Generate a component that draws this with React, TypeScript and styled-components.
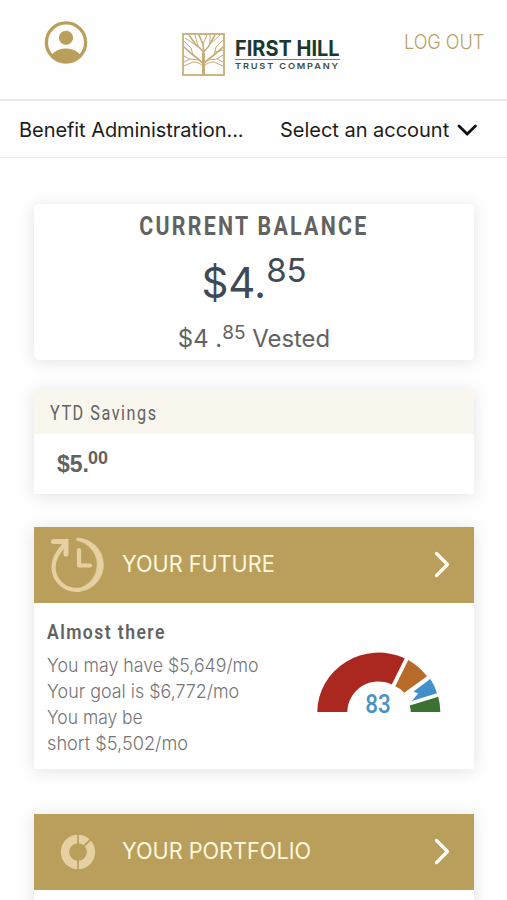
import React from "react";
import styled, { createGlobalStyle } from "styled-components";

const GOLD = "#b99f5b";
const CREAM = "#e6d0a2";

const Global = createGlobalStyle`
  * { box-sizing: border-box; }
  body { margin: 0; background: #fefefe; font-family: Inter, "Open Sans", sans-serif; color: #626262; overflow: hidden; }
`;

const Screen = styled.div`
  height: 900px;
  overflow: hidden;
`;

const Header = styled.header`
  display: flex;
  height: 101px;
  padding: 21px 23px 0 44px;
  border-bottom: 2px solid #e9e9e9;
  background: #fefefe;
`;

const Brand = styled.div`
  display: flex;
  margin: 12px 0 0 94px;
  gap: 10px;
  flex: 1;
`;

const BrandWords = styled.div`
  width: 105px;
  padding-top: 4px;
  color: #183830;
  white-space: nowrap;
`;

const BrandName = styled.div`
  height: 23px;
  border-bottom: 1px solid #6c817c;
  font: 700 21px/23px Inter, sans-serif;
  span { display: inline-block; transform: scaleX(0.95); transform-origin: 0 50%; }
`;

const BrandSub = styled.div`
  font: 600 8px/13px Inter, sans-serif;
  letter-spacing: 1.6px;
  color: #3c4c48;
  span { display: inline-block; transform: scaleX(1.15); transform-origin: 0 50%; }
`;

const LogOut = styled.a`
  width: 80px;
  font-size: 19.5px;
  line-height: 43px;
  font-weight: 350;
  color: #b5a264;
  white-space: nowrap;
  span { display: inline-block; transform: scaleX(0.925); transform-origin: 0 50%; }
`;

const AccountBar = styled.nav`
  display: flex;
  align-items: center;
  height: 57px;
  padding: 1px 29px 0 19px;
  border-bottom: 1px solid #ececec;
  font-size: 20px;
  color: #1c1c1c;
  white-space: nowrap;
`;

const AccountLabel = styled.span<{ $width: number; $spacing: number }>`
  width: ${(p) => p.$width}px;
  letter-spacing: ${(p) => p.$spacing}px;
`;

const Content = styled.main`
  padding: 46px 33px 0 34px;
`;

const Card = styled.section<{ $height: number; $gap: number; $radius?: number }>`
  height: ${(p) => p.$height}px;
  margin-bottom: ${(p) => p.$gap}px;
  border-radius: ${(p) => p.$radius ?? 0}px;
  background: #fff;
  box-shadow: 0 2px 16px rgba(0, 0, 0, 0.11);
`;

const BalanceCard = styled(Card)`
  display: flex;
  flex-direction: column;
  align-items: center;
`;

const Caption = styled.h2`
  margin: 0;
  font: 700 26px/44px Roboto, sans-serif;
  letter-spacing: 2.8px;
  transform: scaleX(0.82);
  white-space: nowrap;
`;

const Balance = styled.div`
  height: 68px;
  font-size: 42px;
  line-height: 69px;
  color: #3f4a57;
  white-space: nowrap;
  sup { font-size: 33px; line-height: 0; vertical-align: 16px; }
`;

const Vested = styled.div`
  font-size: 23.9px;
  line-height: 46px;
  white-space: nowrap;
  sup { font-size: 19px; line-height: 0; vertical-align: 8px; }
`;

const SavingsTitle = styled.h3`
  height: 44px;
  margin: 0;
  padding-left: 16px;
  background: #f9f6ee;
  font: 400 20px/47px Roboto, sans-serif;
  letter-spacing: 1.9px;
  span { display: inline-block; transform: scaleX(0.81); transform-origin: 0 50%; }
`;

const SavingsValue = styled.div`
  padding-left: 23px;
  font: 700 23px/60px "Liberation Sans", sans-serif;
  sup { font-size: 18px; line-height: 0; vertical-align: 8px; margin-left: -1px; }
`;

const Banner = styled.header`
  display: flex;
  align-items: center;
  height: 76px;
  padding: 0 23px 0 14px;
  background: ${GOLD};
  color: #fff8df;
`;

const BannerIcon = styled.div`
  display: grid;
  place-items: center;
  width: 60px;
  margin-right: 14px;
`;

const BannerTitle = styled.h2`
  flex: 1;
  margin: 0;
  padding-bottom: 2px;
  font: 400 22.5px/74px Inter, sans-serif;
  white-space: nowrap;
  span { display: inline-block; transform: scaleX(0.963); transform-origin: 0 50%; }
`;

const FutureBody = styled.div`
  display: flex;
  justify-content: space-between;
  padding: 15px 33px 0 13px;
`;

const Status = styled.h3`
  margin: 0 0 5px;
  font: 600 20.5px/29px Roboto, sans-serif;
  letter-spacing: 1.7px;
  transform: scaleX(0.855);
  transform-origin: 0 50%;
  white-space: nowrap;
`;

const Detail = styled.p`
  margin: 0;
  font: 300 18.5px/26px Inter, sans-serif;
  color: #757575;
`;

const DetailLine = styled.span<{ $stretch: number }>`
  display: block;
  transform: scaleX(${(p) => p.$stretch});
  transform-origin: 0 50%;
`;

const GaugeFrame = styled.div`
  padding-top: 32px;
`;

const Avatar = () => (
  <svg width="44" height="44" viewBox="0 0 44 44">
    <defs><clipPath id="face"><circle cx="22" cy="21.5" r="20" /></clipPath></defs>
    <circle cx="22" cy="16.8" r="7.1" fill={GOLD} />
    <ellipse cx="22" cy="41" rx="17" ry="13.5" fill={GOLD} clipPath="url(#face)" />
    <circle cx="22" cy="21.5" r="19.6" fill="none" stroke={GOLD} strokeWidth="3.3" />
  </svg>
);

const Tree = () => (
  <svg width="43" height="43" viewBox="0 0 43 43" fill="none" stroke="#c6ac75" strokeWidth="1">
    <rect x="1" y="1" width="41" height="41" strokeWidth="1.6" stroke="#bfa469" />
    <path d="M21.5 42V20" strokeWidth="3" />
    <path d="M21.5 24Q22 12 20 9L17 2M21.5 31Q17 26 11 22L2 14M21.5 31Q26 26 32 22L41 14M21.5 20Q20 16 14 12L7 2M21.5 19Q27 14 29 9L33 2" strokeWidth="1.6" />
    <path d="M11 22L9 15L2 8M32 22L34 14L41 7M14 12L3 5M27 12L38 2M21 11L25 2M17 27L8 26L2 23M26 27L35 26L41 22M21.5 34Q18 29 11 29L2 33M21.5 34Q25 29 32 29L41 33M8 26L2 29M35 26L41 29M16 13L13 2M28 11L28 2M33 19L41 17" />
  </svg>
);

const Clock = () => (
  <svg width="58" height="58" viewBox="0 0 58 58" fill="none" stroke={CREAM} strokeLinecap="round" strokeLinejoin="round">
    <path d="M28 2A26.8 26.8 0 0 1 30 55.5L30 52.2A25 24.5 0 0 0 28 4.6Z" fill={CREAM} strokeWidth="0.5" />
    <path d="M30 53.8C15 55 4.5 44 4.5 31C4.5 23 8 17 15 9" strokeWidth="4.2" />
    <path d="M4.5 5.5H17V18" strokeWidth="5" strokeLinejoin="miter" />
    <path d="M30 14V29.5H41" strokeWidth="4.2" />
  </svg>
);

const Donut = () => (
  <svg width="36" height="36" viewBox="0 0 36 36">
    <circle cx="18" cy="18" r="13" fill="none" stroke={CREAM} strokeWidth="8.3" />
    <path d="M18 0V14M18 22V36M21.5 14.5L31 5" stroke={GOLD} strokeWidth="1.8" />
  </svg>
);

const Arrow = () => (
  <svg width="18" height="30" viewBox="0 0 18 30" fill="none" stroke="#fffdf5" strokeWidth="3.2" strokeLinecap="round" strokeLinejoin="round">
    <path d="M3.5 3.5L14.5 14.5L3.5 25.5" />
  </svg>
);

const Chevron = () => (
  <svg width="20" height="14" viewBox="0 0 20 14" fill="none" stroke="#111" strokeWidth="2.8" strokeLinecap="round">
    <path d="M2 3L10.2 11L18.4 3" />
  </svg>
);

const Gauge = () => (
  <svg width="124" height="70" viewBox="317 650 124 70">
    <path d="M317.3 712A61.5 59.5 0 0 1 404.8 658.2L391.8 684.5A31 31 0 0 0 347.3 712Z" fill="#ab2820" />
    <path d="M408.3 660Q419 666 427 676.3L404.2 692.8Q400.5 688.5 395.3 686.3Z" fill="#b76b28" />
    <path d="M430.3 679Q434.5 685 437 693.3L411.8 701L418.2 693.5L413.5 691.5Z" fill="#438fca" />
    <path d="M438.2 696.8Q440.3 704 440.3 712H410.7Q410.8 709 409.8 705.5Z" fill="#3b7131" />
    <text x="378" y="713.4" textAnchor="middle" fontFamily="Roboto" fontSize="26" fontWeight="500" fill="#4b91c3" textLength="25.5" lengthAdjust="spacingAndGlyphs">83</text>
  </svg>
);

export default function App() {
  return (
    <Screen>
      <Global />
      <Header>
        <Avatar />
        <Brand>
          <Tree />
          <BrandWords>
            <BrandName><span>FIRST HILL</span></BrandName>
            <BrandSub><span>TRUST COMPANY</span></BrandSub>
          </BrandWords>
        </Brand>
        <LogOut><span>LOG OUT</span></LogOut>
      </Header>
      <AccountBar>
        <AccountLabel $width={261} $spacing={-0.06}>Benefit Administration...</AccountLabel>
        <AccountLabel $width={177} $spacing={-0.02}>Select an account</AccountLabel>
        <Chevron />
      </AccountBar>
      <Content>
        <BalanceCard $height={156} $gap={30} $radius={5}>
          <Caption>CURRENT BALANCE</Caption>
          <Balance>$4.<sup>85</sup></Balance>
          <Vested>$4 .<sup>85</sup> Vested</Vested>
        </BalanceCard>
        <Card $height={104} $gap={33}>
          <SavingsTitle><span>YTD Savings</span></SavingsTitle>
          <SavingsValue>$5.<sup>00</sup></SavingsValue>
        </Card>
        <Card $height={242} $gap={45}>
          <Banner>
            <BannerIcon><Clock /></BannerIcon>
            <BannerTitle><span>YOUR FUTURE</span></BannerTitle>
            <Arrow />
          </Banner>
          <FutureBody>
            <div>
              <Status>Almost there</Status>
              <Detail>
                <DetailLine $stretch={0.96}>You may have $5,649/mo</DetailLine>
                <DetailLine $stretch={0.967}>Your goal is $6,772/mo</DetailLine>
                <DetailLine $stretch={0.945}>You may be</DetailLine>
                <DetailLine $stretch={0.983}>short $5,502/mo</DetailLine>
              </Detail>
            </div>
            <GaugeFrame><Gauge /></GaugeFrame>
          </FutureBody>
        </Card>
        <Card $height={200} $gap={0}>
          <Banner>
            <BannerIcon><Donut /></BannerIcon>
            <BannerTitle><span>YOUR PORTFOLIO</span></BannerTitle>
            <Arrow />
          </Banner>
        </Card>
      </Content>
    </Screen>
  );
}
